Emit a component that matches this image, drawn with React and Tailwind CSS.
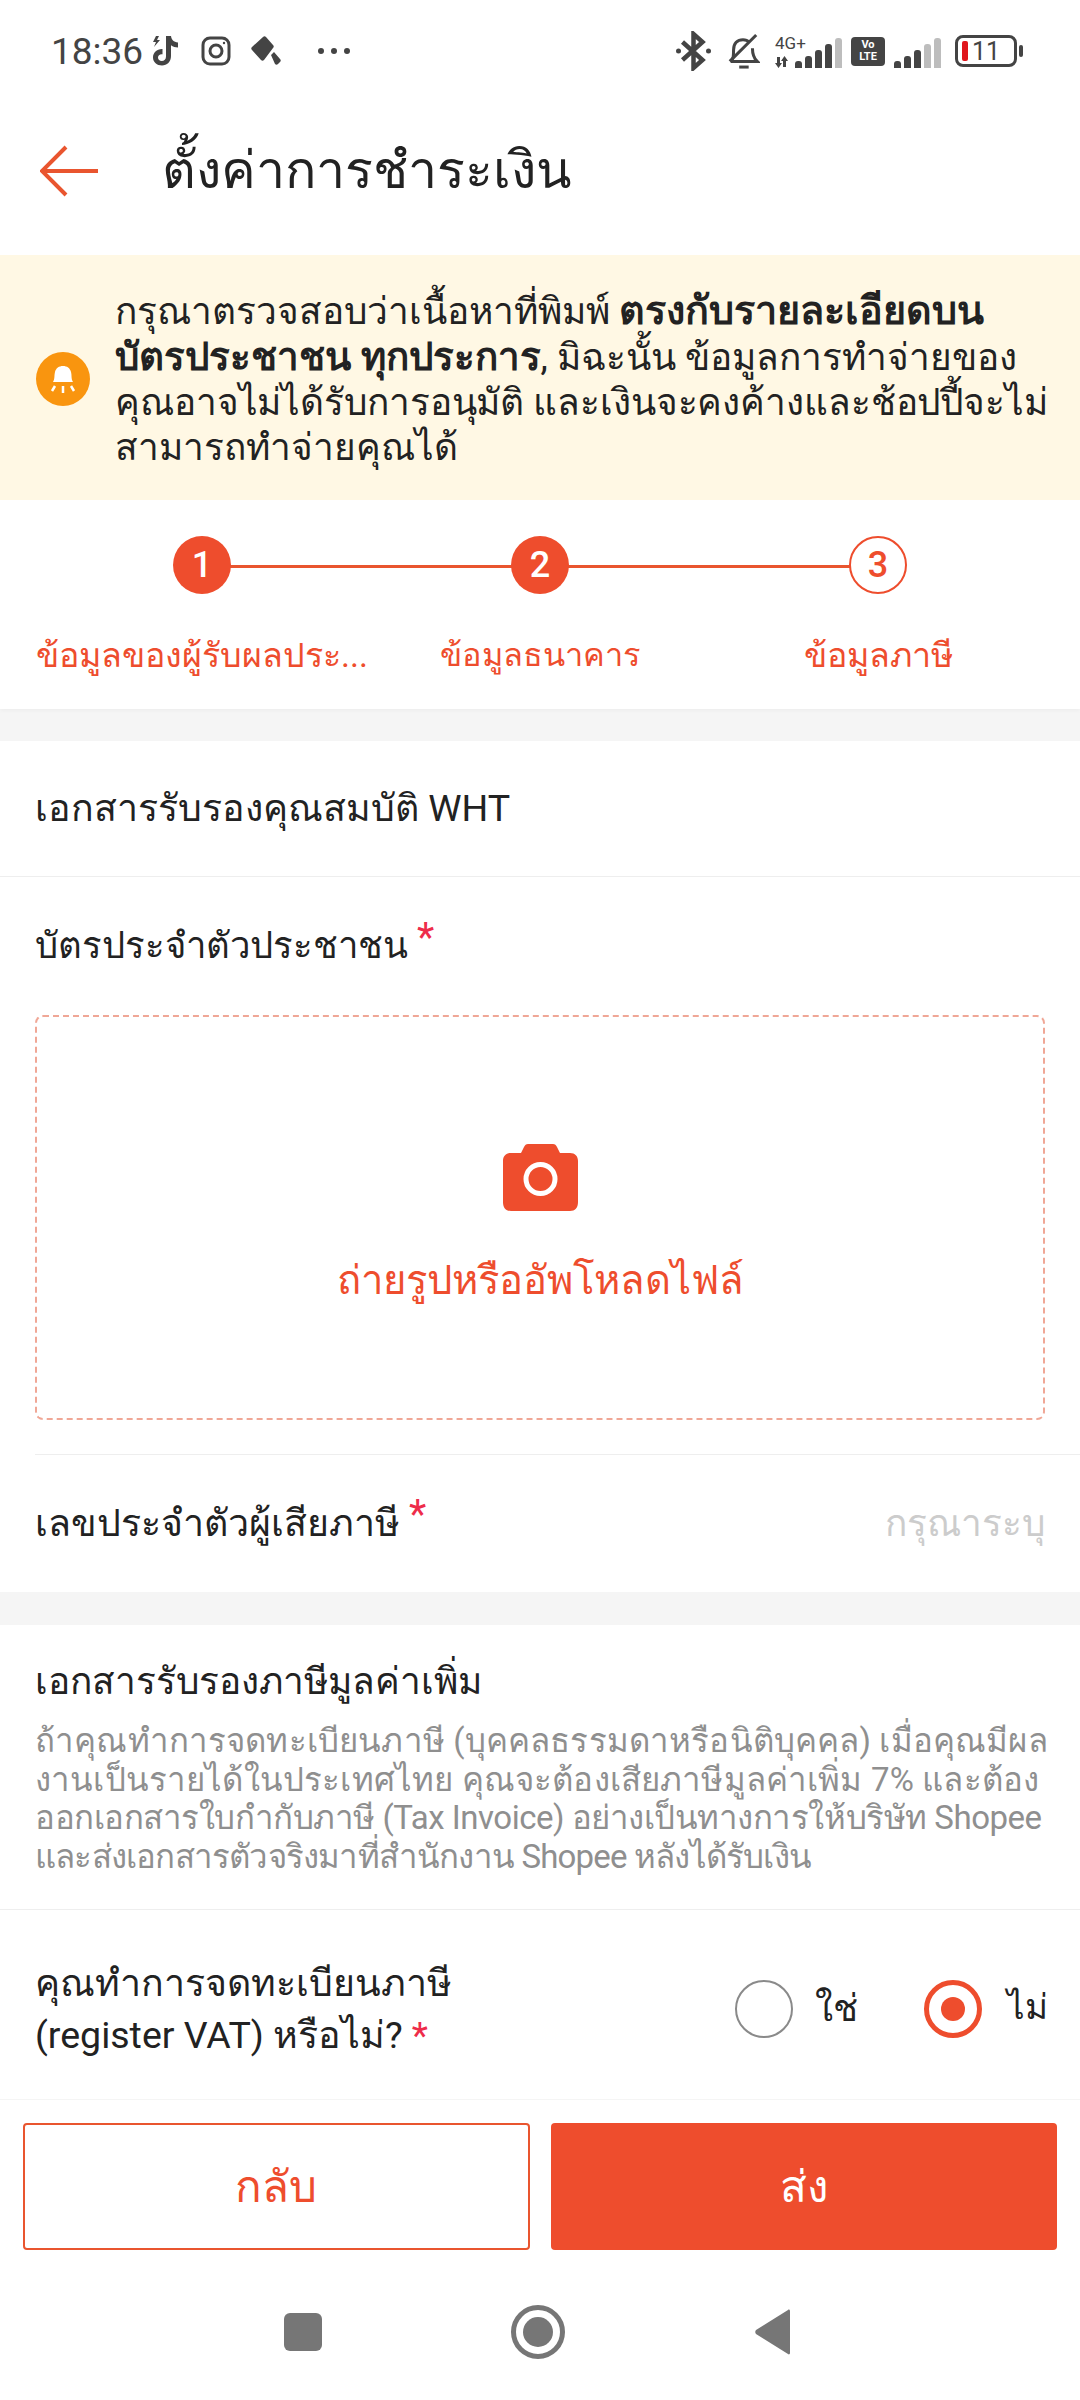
const font = { fontFamily: 'Roboto, "Noto Sans", "Noto Sans CJK SC", sans-serif' };

function Bars({ lit }) {
  const heights = [7, 12, 18, 24, 30];
  return (
    <div className="flex items-end gap-[3px]">
      {heights.map((h, i) => (
        <div
          key={i}
          className={`w-[7px] rounded-t-[3px] ${i < lit ? 'bg-[#444444]' : 'bg-[#bdbdbd]'}`}
          style={{ height: h }}
        />
      ))}
    </div>
  );
}

function StatusBar() {
  return (
    <div className="h-[90px] pt-[26px] pl-[51px] pr-[57px] flex items-start justify-between text-[#444444]">
      <div className="flex items-center gap-[12px] h-[50px]">
        <span className="text-[37px] leading-none">18:36</span>
        <svg width="30" height="32" viewBox="0 0 30 32" fill="#444444" className="-ml-[4px]">
          <path d="M15 1h5c.4 3.6 2.600 6 7 6.500v5c-2.700 0-5-.8-7-2.200V21c0 5.800-4 9.500-9 9.500S2 27 2 22.500c0-5 4-8.800 9.500-8.500v5.200c-2.600-.4-4.500 1-4.500 3.300 0 2 1.700 3.500 3.700 3.500 2.500 0 4.300-1.700 4.300-4.500z" />
          <path d="M5 1 2 7h3l-2 5 6-7H6l2-4z" />
        </svg>
        <svg width="30" height="30" viewBox="0 0 30 30" fill="none" stroke="#444444" strokeWidth="3" className="ml-[8px]">
          <rect x="2" y="2" width="26" height="26" rx="7" />
          <circle cx="15" cy="15" r="6" />
          <circle cx="23" cy="7" r="1.200" fill="#444444" stroke="none" />
        </svg>
        <svg width="30" height="30" viewBox="0 0 30 30" fill="#444444" className="ml-[8px]">
          <path d="M12 1 1 11c-1 1-1 2 0 3l9 10c1 1 2 1 3 0l9-12c1-1 1-2 0-3l-7-8c-1-1-2-1-3 0z" />
          <path d="m20 19 3-3 6 7c1 1 1 2 0 3l-2 2c-1 1-2 1-3 0z" />
        </svg>
        <div className="flex gap-[7px] ml-[25px]">
          <div className="w-[6px] h-[6px] rounded-full bg-[#444444]" />
          <div className="w-[6px] h-[6px] rounded-full bg-[#444444]" />
          <div className="w-[6px] h-[6px] rounded-full bg-[#444444]" />
        </div>
      </div>
      <div className="flex items-center h-[50px]">
        <svg width="37" height="40" viewBox="0 0 36 40" fill="none" stroke="#444444" strokeWidth="4.500">
          <path d="M7 11 27 29 18 37V3l9 8L7 29" />
          <circle cx="3" cy="20" r="2.500" fill="#444444" stroke="none" />
          <circle cx="33" cy="20" r="2.500" fill="#444444" stroke="none" />
        </svg>
        <svg width="34" height="40" viewBox="0 0 36 40" fill="none" stroke="#444444" strokeWidth="3.200" className="ml-[14px]">
          <path d="M5 31c3-3 3-6 3-12 0-7 4-11 10-11 3 0 5 1 7 3M28 17c0 6 1 10 5 14H5" />
          <path d="M4 31 32 3" />
          <path d="M14 37h10" />
        </svg>
        <div className="flex flex-col ml-[15px] w-[34px]">
          <span className="text-[17px] leading-[18px]">4G+</span>
          <svg width="18" height="14" viewBox="0 0 18 14" fill="#444444" className="mt-[3px]">
            <path d="M2 2h3v6h2l-3.500 5L0 8h2zM11 12H8V6H6l3.500-5L13 6h-2z" />
          </svg>
        </div>
        <div className="-ml-[14px] mt-[3px]"><Bars lit={4} /></div>
        <div className="w-[34px] h-[29px] ml-[9px] rounded-[4px] bg-[#444444] text-white text-[11px] leading-[12px] font-bold text-center flex flex-col justify-center">
          <span>Vo</span>
          <span>LTE</span>
        </div>
        <div className="ml-[9px] mt-[3px]"><Bars lit={3} /></div>
        <div className="ml-[14px] w-[62px] h-[32px] rounded-[8px] border-[3px] border-[#444444] flex items-center pl-[4px]">
          <div className="w-[6px] h-[20px] rounded-[2px] bg-[#e0161c]" />
          <span className="text-[25px] leading-none ml-[4px]">11</span>
        </div>
        <div className="w-[4px] h-[12px] rounded-[2px] bg-[#444444] ml-[2px]" />
      </div>
    </div>
  );
}

function Step({ n, label, filled, labelClass }) {
  return (
    <div className="w-[338px] flex flex-col items-center z-10">
      <div
        className={`w-[58px] h-[58px] rounded-full flex items-center justify-center text-[36px] font-medium ${
          filled ? 'bg-[#ee4d2d] text-white' : 'bg-white border-2 border-[#ee4d2d] text-[#ee4d2d]'
        }`}
      >
        {n}
      </div>
      <div className={`mt-[37px] leading-[48px] text-[#ee4d2d] whitespace-nowrap ${labelClass}`}>{label}</div>
    </div>
  );
}

function Required() {
  return <span className="text-[#ee2c4a] text-[40px] leading-none ml-[9px] relative -top-[8px]">*</span>;
}

export default function App() {
  return (
    <div className="w-[1080px] h-[2400px] bg-white flex flex-col overflow-hidden" style={font}>
      <StatusBar />

      <div className="h-[165px] flex items-center pl-[40px] pb-[4px]">
        <svg width="58" height="52" viewBox="0 0 58 52" fill="none" stroke="#e9552f" strokeWidth="4">
          <path d="M26 2 2 26l24 24M2 26h56" />
        </svg>
        <h1 className="ml-[64px] text-[52px] leading-none text-[#222222] font-normal">ตั้งค่าการชำระเงิน</h1>
      </div>

      <div className="h-[245px] bg-[#fff8e4] flex items-center pl-[36px] pr-[10px] pt-[2px]">
        <div className="w-[54px] h-[54px] rounded-full bg-[#f9950f] flex items-center justify-center shrink-0">
          <svg width="38" height="38" viewBox="0 0 38 38" fill="none">
            <path d="M9 22c2-3 1-6 2-10 1-4 4-6 8-6s7 2 8 6c1 4 0 7 2 10z" fill="white" />
            <path d="M19 26v7M11 26l-3 5M27 26l3 5" stroke="white" strokeWidth="2.500" />
          </svg>
        </div>
        <p className="ml-[25px] text-[37px] leading-[45px] text-[#222222] whitespace-nowrap">
          กรุณาตรวจสอบว่าเนื้อหาที่พิมพ์ <b className="text-[39.500px]">ตรงกับรายละเอียดบน</b>
          <br />
          <b className="text-[38.500px]">บัตรประชาชน ทุกประการ</b>, มิฉะนั้น ข้อมูลการทำจ่ายของ
          <br />
          <span className="tracking-[-0.100px]">คุณอาจไม่ได้รับการอนุมัติ และเงินจะคงค้างและช้อปปี้จะไม่</span>
          <br />
          สามารถทำจ่ายคุณได้
        </p>
      </div>

      <div className="h-[209px] bg-white pt-[36px] relative shadow-[0_2px_4px_rgba(0,0,0,0.03)]">
        <div className="absolute left-[202px] top-[65px] w-[675px] h-[3px] bg-[#e9552f]" />
        <div className="flex pl-[33px]">
          <Step n="1" label="ข้อมูลของผู้รับผลประ..." filled labelClass="text-[34px]" />
          <Step n="2" label="ข้อมูลธนาคาร" filled labelClass="text-[32.500px]" />
          <Step n="3" label="ข้อมูลภาษี" labelClass="text-[34px]" />
        </div>
      </div>

      <div className="h-[32px] bg-[#f5f5f5]" />

      <div className="h-[136px] border-b border-[#eeeeee] pl-[35px] flex items-center text-[37.500px] text-[#222222]">
        เอกสารรับรองคุณสมบัติ WHT
      </div>

      <div className="px-[35px]">
        <div className="h-[138px] flex items-center text-[36.500px] text-[#222222]">
          บัตรประจำตัวประชาชน
          <Required />
        </div>
        <div className="h-[405px] rounded-[8px] border-2 border-dashed border-[#f0a796] flex flex-col items-center pt-[127px]">
          <svg width="75" height="67" viewBox="0 0 75 67">
            <path
              fill="#ee4d2d"
              d="M25 0h25c2 0 3 1 4 3l3 6h10c5 0 8 3 8 8v41c0 6-3 9-8 9H8c-5 0-8-3-8-9V17c0-5 3-8 8-8h10l3-6c1-2 2-3 4-3z"
            />
            <circle cx="37.500" cy="35" r="14.500" fill="none" stroke="white" strokeWidth="5" />
          </svg>
          <div className="mt-[45px] text-[40px] leading-[50px] text-[#ee4d2d]">ถ่ายรูปหรืออัพโหลดไฟล์</div>
        </div>
      </div>

      <div className="ml-[35px] mt-[34px] h-[138px] border-t border-[#eeeeee] pr-[35px] flex items-center justify-between">
        <div className="text-[37.500px] text-[#222222]">
          เลขประจำตัวผู้เสียภาษี
          <Required />
        </div>
        <div className="text-[37px] text-[#cccccc]">กรุณาระบุ</div>
      </div>

      <div className="h-[33px] bg-[#f5f5f5]" />

      <div className="h-[285px] border-b border-[#eeeeee] px-[35px] pt-[33px]">
        <div className="text-[37px] leading-[48px] text-[#222222]">เอกสารรับรองภาษีมูลค่าเพิ่ม</div>
        <div className="mt-[16px] text-[33px] leading-[38.500px] text-[#8f8f8f] whitespace-nowrap">
          <p className="tracking-[0.15px]">ถ้าคุณทำการจดทะเบียนภาษี (บุคคลธรรมดาหรือนิติบุคคล) เมื่อคุณมีผล</p>
          <p className="tracking-[0.15px]">งานเป็นรายได้ในประเทศไทย คุณจะต้องเสียภาษีมูลค่าเพิ่ม 7% และต้อง</p>
          <p className="tracking-[-0.480px]">ออกเอกสารใบกำกับภาษี (Tax Invoice) อย่างเป็นทางการให้บริษัท Shopee</p>
          <p className="tracking-[-0.800px]">และส่งเอกสารตัวจริงมาที่สำนักงาน Shopee หลังได้รับเงิน</p>
        </div>
      </div>

      <div className="flex-1 pl-[35px] pr-[35px] pt-[8px] flex items-center justify-between">
        <div className="text-[37.500px] leading-[52px] text-[#222222]">
          คุณทำการจดทะเบียนภาษี
          <br />
          (register VAT) หรือไม่?
          <span className="text-[#ee2c4a] ml-[9px]">*</span>
        </div>
        <div className="flex items-center">
          <div className="w-[58px] h-[58px] rounded-full border-2 border-[#8a8a8a]" />
          <span className="ml-[22px] text-[37px] text-[#222222]">ใช่</span>
          <div className="ml-[66px] w-[58px] h-[58px] rounded-full border-[5px] border-[#ee4d2d] flex items-center justify-center">
            <div className="w-[24px] h-[24px] rounded-full bg-[#ee4d2d]" />
          </div>
          <span className="ml-[25px] w-[38px] text-[35px] whitespace-nowrap text-[#222222]">ไม่</span>
        </div>
      </div>

      <div className="h-[301px] border-t border-[#f5f5f5] bg-white">
        <div className="pt-[23px] px-[23px] grid grid-cols-2 gap-[21px]">
          <button className="h-[127px] rounded-[4px] border-2 border-[#e9552f] text-[#ee4d2d] text-[44px]">กลับ</button>
          <button className="h-[127px] rounded-[4px] bg-[#ee4d2d] text-white text-[44px]">ส่ง</button>
        </div>
        <div className="mt-[55px] flex items-center justify-center gap-[189px] pr-[4px]">
          <div className="w-[38px] h-[38px] rounded-[6px] bg-[#767676]" />
          <div className="w-[54px] h-[54px] rounded-full border-[5px] border-[#767676] flex items-center justify-center">
            <div className="w-[30px] h-[30px] rounded-full bg-[#767676]" />
          </div>
          <svg width="38" height="46" viewBox="0 0 38 46" fill="#767676">
            <path d="M36 2v42c0 1-1 2-2 1L2 25c-1-1-1-3 0-4L34 1c1-1 2 0 2 1z" />
          </svg>
        </div>
      </div>
    </div>
  );
}
